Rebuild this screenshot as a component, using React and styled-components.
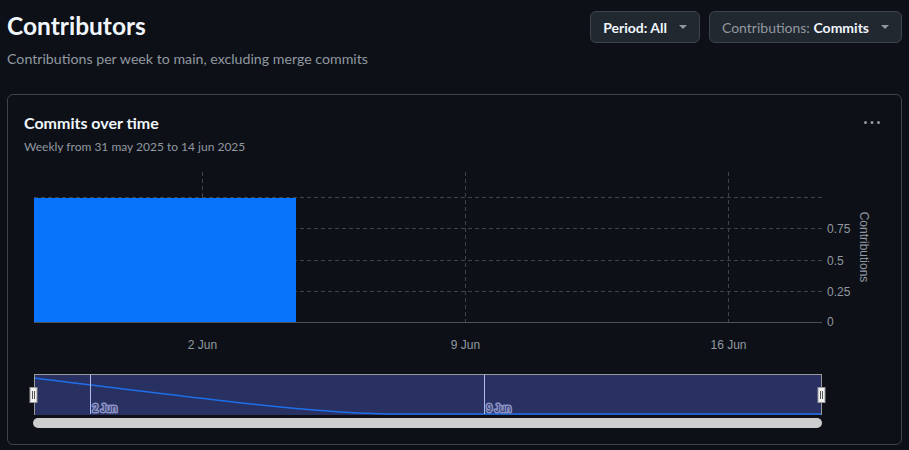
import React from "react";
import styled, { createGlobalStyle } from "styled-components";

const GlobalStyle = createGlobalStyle`
  body {
    margin: 0;
    background: #0d1117;
    font-family: Lato, "Liberation Sans", sans-serif;
    color: #f0f6fc;
  }
`;

const Page = styled.div`
  padding: 8px 7px;
`;

const Header = styled.div`
  display: flex;
  justify-content: space-between;
  align-items: flex-start;
`;

const Title = styled.h1`
  margin: 0;
  font-size: 24.5px;
  line-height: 36px;
  font-weight: 700;
  color: #f0f6fc;
`;

const Subtitle = styled.p`
  margin: 4px 0 0;
  font-size: 14.2px;
  line-height: 21px;
  color: #9198a1;
`;

const Actions = styled.div`
  display: flex;
  gap: 9px;
  margin-top: 3px;
`;

const SelectButton = styled.button`
  display: flex;
  align-items: center;
  gap: 12px;
  height: 32px;
  padding: 0 12px;
  background: #212830;
  border: 1px solid #3d444d;
  border-radius: 6px;
  font-family: inherit;
  font-size: 14px;
  color: #f0f6fc;
  cursor: pointer;
`;

const Label = styled.span`
  color: ${(props) => (props.muted ? "#9198a1" : "#f0f6fc")};
  font-weight: ${(props) => (props.bold ? 700 : 400)};
`;

const Caret = styled.span`
  width: 0;
  height: 0;
  border-left: 4px solid transparent;
  border-right: 4px solid transparent;
  border-top: 4px solid #9198a1;
`;

const Card = styled.section`
  margin-top: 25px;
  border: 1px solid #3d444d;
  border-radius: 6px;
  padding: 16px 16px 0;
  height: 351px;
  box-sizing: border-box;
`;

const CardHeader = styled.div`
  display: flex;
  justify-content: space-between;
  align-items: flex-start;
`;

const CardTitle = styled.h2`
  margin: 0;
  font-size: 16px;
  line-height: 24px;
  font-weight: 700;
  color: #f0f6fc;
`;

const CardSub = styled.p`
  margin: 3px 0 0;
  font-size: 12px;
  line-height: 18px;
  color: #9198a1;
`;

const MoreButton = styled.button`
  display: flex;
  background: none;
  border: 0;
  padding: 4px 0 0;
  margin-right: 5px;
  color: #9198a1;
  cursor: pointer;
`;

const Chart = styled.svg`
  display: block;
  margin-top: 4px;
  font-family: "Liberation Sans", "DejaVu Sans", sans-serif;
`;

const Dropdown = ({ children }) => (
  <SelectButton>
    <span>{children}</span>
    <Caret />
  </SelectButton>
);

const yTicks = [
  { y: 291.5, label: "0.25" },
  { y: 260.5, label: "0.5" },
  { y: 228.5, label: "0.75" },
];

const xTicks = [
  { x: 202.5, label: "2 Jun" },
  { x: 465.5, label: "9 Jun" },
  { x: 728.5, label: "16 Jun" },
];

const Handle = ({ x }) => (
  <g>
    <rect x={x - 3.5} y={387.5} width={7} height={15} fill="#f2f2f2" stroke="#999" />
    <line x1={x - 1} y1={391} x2={x - 1} y2={399} stroke="#555" />
    <line x1={x + 1} y1={391} x2={x + 1} y2={399} stroke="#555" />
  </g>
);

const CommitsChart = () => (
  <Chart width={861} height={284} viewBox="24 160 861 284">
    {xTicks.map((t) => (
      <line key={t.label} x1={t.x} y1={172} x2={t.x} y2={322} stroke="#3d444d" strokeDasharray="4 3" />
    ))}
    <line x1={34} y1={197.5} x2={822} y2={197.5} stroke="#3d444d" strokeDasharray="4 3" />
    {yTicks.map((t) => (
      <line key={t.label} x1={34} y1={t.y} x2={822} y2={t.y} stroke="#3d444d" strokeDasharray="4 3" />
    ))}
    <rect x={34} y={198} width={262} height={124} fill="#0874fb" />
    <line x1={34} y1={322.5} x2={822} y2={322.5} stroke="#4b525b" />
    {yTicks.concat({ y: 322, label: "0" }).map((t) => (
      <text key={t.label} x={827} y={t.y + 4} fontSize="12" fill="#9198a1">
        {t.label}
      </text>
    ))}
    <text x={860} y={247} fontSize="12" fill="#9198a1" textAnchor="middle" transform="rotate(90 860 247)">
      Contributions
    </text>
    {xTicks.map((t) => (
      <text key={t.label} x={t.x} y={349} fontSize="12" fill="#9198a1" textAnchor="middle">
        {t.label}
      </text>
    ))}

    <rect x={34} y={374.5} width={788} height={40.5} fill="#283162" />
    <path d="M34 378 C 230 402, 320 414, 400 414 L 822 414" fill="none" stroke="#1f6feb" strokeWidth="1.5" />
    <line x1={34} y1={374.5} x2={822} y2={374.5} stroke="#999" />
    <line x1={34.5} y1={374.5} x2={34.5} y2={415} stroke="#999" />
    <line x1={821.5} y1={374.5} x2={821.5} y2={415} stroke="#999" />
    {[
      { x: 90.5, label: "2 Jun" },
      { x: 484.5, label: "9 Jun" },
    ].map((t) => (
      <g key={t.label}>
        <line x1={t.x} y1={374.5} x2={t.x} y2={414} stroke="#b4bbe6" />
        <text
          x={t.x + 2}
          y={412}
          fontSize="10"
          fill="#2b3468"
          stroke="#8a92c6"
          strokeWidth="3"
          paintOrder="stroke"
          strokeLinejoin="round"
        >
          {t.label}
        </text>
      </g>
    ))}
    <Handle x={33.5} />
    <Handle x={821.5} />
    <rect x={33} y={418} width={789} height={10} rx={5} fill="#cdcdcd" />
  </Chart>
);

const KebabIcon = () => (
  <svg width="16" height="16" viewBox="0 0 16 16" fill="currentColor">
    <path d="M8 9a1.5 1.5 0 1 0 0-3 1.5 1.5 0 0 0 0 3ZM1.5 9a1.5 1.5 0 1 0 0-3 1.5 1.5 0 0 0 0 3Zm13 0a1.5 1.5 0 1 0 0-3 1.5 1.5 0 0 0 0 3Z" />
  </svg>
);

export default function App() {
  return (
    <Page>
      <GlobalStyle />
      <Header>
        <div>
          <Title>Contributors</Title>
          <Subtitle>Contributions per week to main, excluding merge commits</Subtitle>
        </div>
        <Actions>
          <Dropdown>
            <Label bold>Period: All</Label>
          </Dropdown>
          <Dropdown>
            <Label muted>Contributions: </Label>
            <Label bold>Commits</Label>
          </Dropdown>
        </Actions>
      </Header>
      <Card>
        <CardHeader>
          <div>
            <CardTitle>Commits over time</CardTitle>
            <CardSub>Weekly from 31 may 2025 to 14 jun 2025</CardSub>
          </div>
          <MoreButton aria-label="More options">
            <KebabIcon />
          </MoreButton>
        </CardHeader>
        <CommitsChart />
      </Card>
    </Page>
  );
}
